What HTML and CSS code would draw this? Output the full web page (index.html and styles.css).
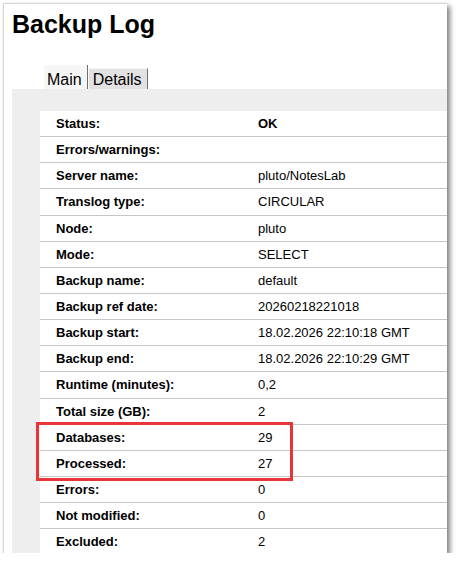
FILE: index.html
```html
<!DOCTYPE html>
<html>
<head>
<meta charset="utf-8">
<link rel="stylesheet" href="styles.css">
</head>
<body>
<div class="window">
  <h1 class="title">Backup Log</h1>
  <div class="tabs">
    <span class="tab tab-active">Main</span>
    <span class="tab tab-inactive">Details</span>
  </div>
  <div class="panel">
    <div class="table">
      <div class="row"><span class="label">Status:</span><span class="value value-bold">OK</span></div>
      <div class="row"><span class="label">Errors/warnings:</span><span class="value"></span></div>
      <div class="row"><span class="label">Server name:</span><span class="value">pluto/NotesLab</span></div>
      <div class="row"><span class="label">Translog type:</span><span class="value">CIRCULAR</span></div>
      <div class="row"><span class="label">Node:</span><span class="value">pluto</span></div>
      <div class="row"><span class="label">Mode:</span><span class="value">SELECT</span></div>
      <div class="row"><span class="label">Backup name:</span><span class="value">default</span></div>
      <div class="row"><span class="label">Backup ref date:</span><span class="value">20260218221018</span></div>
      <div class="row"><span class="label">Backup start:</span><span class="value">18.02.2026 22:10:18 GMT</span></div>
      <div class="row"><span class="label">Backup end:</span><span class="value">18.02.2026 22:10:29 GMT</span></div>
      <div class="row"><span class="label">Runtime (minutes):</span><span class="value">0,2</span></div>
      <div class="row"><span class="label">Total size (GB):</span><span class="value">2</span></div>
      <div class="row"><span class="label">Databases:</span><span class="value">29</span></div>
      <div class="row"><span class="label">Processed:</span><span class="value">27</span></div>
      <div class="row"><span class="label">Errors:</span><span class="value">0</span></div>
      <div class="row"><span class="label">Not modified:</span><span class="value">0</span></div>
      <div class="row"><span class="label">Excluded:</span><span class="value">2</span></div>
      <div class="highlight"></div>
    </div>
  </div>
</div>
</body>
</html>
```
FILE: styles.css
```css
html, body {
  margin: 0;
  padding: 0;
  background: #ffffff;
}

body {
  font-family: "Liberation Sans", Arial, sans-serif;
  color: #000;
}

.window {
  position: relative;
  margin: 3px 0 0 3px;
  width: 444px;
  height: 550px;
  box-sizing: border-box;
  border-top: 1px solid #d6d6d6;
  border-left: 1px solid #d6d6d6;
  background: #fff;
  box-shadow: 3px 3px 5px rgba(0, 0, 0, 0.5);
  overflow: hidden;
}

.title {
  margin: 0;
  padding: 5px 0 0 8px;
  font-size: 25px;
  line-height: 30px;
  font-weight: bold;
}

.tabs {
  display: flex;
  align-items: flex-end;
  margin: 26px 0 0 40px;
  height: 24px;
}

.tab {
  font-size: 16px;
  line-height: 18px;
  box-sizing: border-box;
}

.tab-active {
  height: 24px;
  padding: 6px 5px 0 3px;
  background: #f6f6f6;
  border-right: 1px solid #6f6f6f;
}

.tab-inactive {
  height: 21px;
  padding: 2px 5px 0 4px;
  background: #e2e2e2;
  border-top: 1px solid #f4f4f4;
  border-left: 1px solid #ffffff;
  border-right: 1px solid #6f6f6f;
}

.panel {
  margin-left: 8px;
  padding: 22px 0 0 28px;
  background: #eeeeee;
  height: 600px;
}

.table {
  position: relative;
  background: #fff;
}

.row {
  display: flex;
  height: 26.15px;
  box-sizing: border-box;
  border-bottom: 1px solid #c6c6c6;
  font-size: 13px;
  line-height: 25px;
  align-items: center;
}

.label {
  width: 202px;
  padding-left: 16px;
  font-weight: bold;
  flex: none;
}

.value {
  flex: 1;
}

.value-bold {
  font-weight: bold;
}

.highlight {
  position: absolute;
  left: -4px;
  top: 311px;
  width: 257px;
  height: 59px;
  box-sizing: border-box;
  border: 3px solid #e8353a;
}
```
